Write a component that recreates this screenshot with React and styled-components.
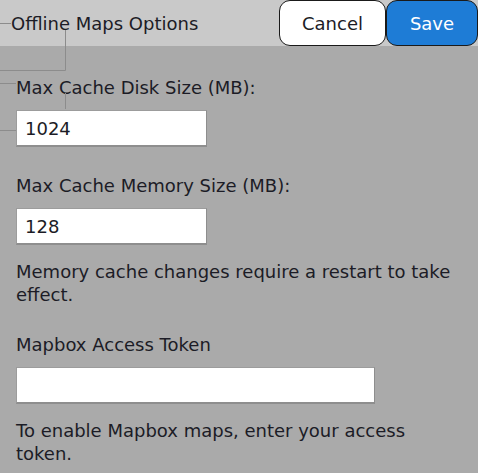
import React from "react";
import styled, { createGlobalStyle } from "styled-components";

const Global = createGlobalStyle`
  html, body { margin: 0; padding: 0; background: #aaaaaa; }
  body { font-family: "DejaVu Sans", Verdana, sans-serif; color: #1c1c26; }
  * { box-sizing: border-box; }
`;

const Page = styled.div`
  position: relative;
  width: 478px;
  height: 473px;
  overflow: hidden;
  background: #aaaaaa;
`;

const Header = styled.header`
  display: flex;
  align-items: stretch;
  height: 46px;
  background: #c9c9c9;
`;

const Title = styled.h1`
  flex: 1;
  margin: 0;
  padding-left: 11px;
  display: flex;
  align-items: center;
  font-size: 18px;
  font-weight: normal;
  color: #1c1c26;
`;

const Button = styled.button`
  font-family: "DejaVu Sans", Verdana, sans-serif;
  font-size: 18px;
  width: ${(p) => p.$w}px;
  border: 1px solid #1a1a1a;
  border-radius: 11px;
  background: ${(p) => (p.$primary ? "#1e7cd6" : "#ffffff")};
  color: ${(p) => (p.$primary ? "#ffffff" : "#1c1c26")};
  padding: 0;
`;

const Content = styled.main`
  padding: 30px 0 0 16px;
  display: flex;
  flex-direction: column;
`;

const Field = styled.div`
  display: flex;
  flex-direction: column;
  align-items: flex-start;
  margin-bottom: ${(p) => p.$mb}px;
`;

const Label = styled.label`
  font-size: 18px;
  line-height: 23px;
  margin-bottom: 11px;
`;

const Input = styled.input`
  width: ${(p) => p.$w}px;
  height: 37px;
  border: 1px solid #9c9c9c;
  border-right-color: #8e8e8e;
  border-bottom: 2px solid #8e8e8e;
  background: #ffffff;
  font-family: "DejaVu Sans", Verdana, sans-serif;
  font-size: 18px;
  color: #1c1c26;
  padding: 0 8px;
  outline: none;
`;

const Help = styled.p`
  margin: 15px 0 0;
  font-size: 18px;
  line-height: 23px;
  width: 442px;
`;

const Connectors = styled.svg`
  position: absolute;
  left: 0;
  top: 0;
  pointer-events: none;
`;

export default function App() {
  return (
    <Page>
      <Global />
      <Header>
        <Title>Offline Maps Options</Title>
        <Button $w={107}>Cancel</Button>
        <Button $w={92} $primary>Save</Button>
      </Header>
      <Content>
        <Field $mb={27}>
          <Label>Max Cache Disk Size (MB):</Label>
          <Input $w={191} defaultValue="1024" />
        </Field>
        <Field $mb={27}>
          <Label>Max Cache Memory Size (MB):</Label>
          <Input $w={191} defaultValue="128" />
          <Help>Memory cache changes require a restart to take effect.</Help>
        </Field>
        <Field $mb={0}>
          <Label>Mapbox Access Token</Label>
          <Input $w={359} defaultValue="" />
          <Help>To enable Mapbox maps, enter your access token.</Help>
        </Field>
      </Content>
      <Connectors width="80" height="140" viewBox="0 0 80 140">
        <g stroke="#8c8c8c" strokeWidth="1" fill="none">
          <path d="M0 23.5H11" />
          <path d="M65.5 30V70.5H0" />
          <path d="M0 83.5H16" />
          <path d="M65.5 93V109" />
          <path d="M0 130.5H16" />
        </g>
      </Connectors>
    </Page>
  );
}
